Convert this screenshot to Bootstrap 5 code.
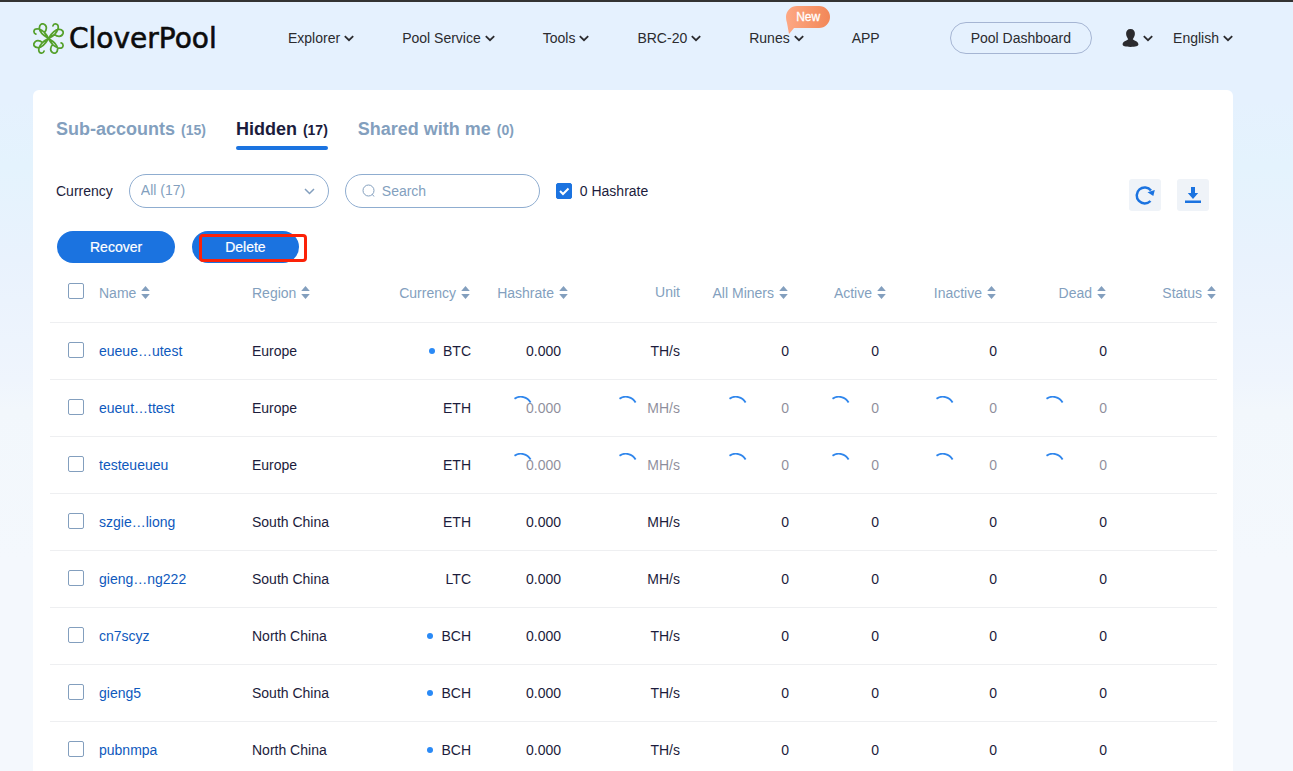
<!DOCTYPE html>
<html lang="en">
<head>
<meta charset="utf-8">
<meta name="viewport" content="width=device-width, initial-scale=1">
<title>CloverPool</title>
<link href="https://cdn.jsdelivr.net/npm/bootstrap@5.3.0/dist/css/bootstrap.min.css" rel="stylesheet">
<style>
  :root { --ink: #1c1c3c; --slate: #839fbe; --blue: #1b73e0; }
  body {
    font: 14px/20px "Liberation Sans", Arial, sans-serif;
    color: var(--ink);
    background: linear-gradient(180deg, #e5f1fe 0, #e5f1fe 100px, #e4f3fd 165px, #e9f2fd 260px, #eff5fd 380px, #f2f7fc 410px, #f4f8fd 560px) no-repeat #f4f8fd;
    border-top: 2px solid #333;
  }
  .page-gutter { padding-left: 33px; padding-right: 60px; }
  .top-bar { height: 88px; padding-top: 20px; align-items: flex-start; }
  .top-bar a, .menu-btn { color: #2b2b2e; text-decoration: none; }
  .menu-btn { background: none; border: 0; padding: 0; display: inline-flex; align-items: center; gap: 4px; position: relative; white-space: nowrap; }
  .brand { width: 187px; margin-right: 68px; gap: 5px; }
  .brand-name { font: 28px/32px "DejaVu Sans", sans-serif; color: #0c0c0c; padding-top: 1px; -webkit-text-stroke: .6px #0c0c0c; }
  .bar-group { height: 32px; }
  .main-links { gap: 48px; }
  .dash-link { border: 1px solid #a5b5d3; border-radius: 16px; height: 32px; line-height: 30px; padding: 0 20px; margin-right: 30px; }
  .new-tag { position: absolute; left: 37px; top: -22px; width: 44px; height: 28px; color: #fff; font-size: 12px; line-height: 22px; text-align: center; }
  .new-tag svg { position: absolute; inset: 0; }
  .new-tag span { position: relative; -webkit-text-stroke: .3px #fff; }
  .panel { background: #fff; border-radius: 6px 6px 0 0; padding: 24px 16px 0 17px; }
  .inset-row { padding-left: 6px; padding-right: 8px; }
  .tab-row { gap: 30px; }
  .tab-row button { background: none; border: 0; padding: 5px 0 6px; border-bottom: 4px solid transparent; color: var(--slate); font-weight: 700; font-size: 18px; line-height: 20px; }
  .tab-row button small { font-size: 14px; margin-left: 6px; }
  .tab-row button.active { color: var(--ink); position: relative; }
  .tab-row button.active::after { content: ""; position: absolute; left: 0; right: 0; bottom: -4px; height: 4px; border-radius: 2px; background: var(--blue); }
  .filter-row { margin-top: 24px; gap: 16px; }
  .pill { height: 34px; border: 1px solid #8fadd0; border-radius: 17px; color: var(--slate); background: #fff; }
  .pill-select { width: 200px; }
  .pill-select select { appearance: none; border: 0; background: none; color: inherit; padding: 0 11px; width: 100%; height: 30px; outline: 0; }
  .pill-select svg { position: absolute; right: 13px; top: 13px; pointer-events: none; }
  .pill-search { width: 195px; padding: 0 15px; gap: 6px; }
  .pill-search input { border: 0; padding: 0; background: none; width: 100%; outline: 0; }
  .pill-search input::placeholder { color: var(--slate); opacity: 1; }
  .tick { appearance: none; display: block; width: 16px; height: 16px; margin: 0; border: 1px solid #839fbe; border-radius: 2px; background: #fff; flex: none; }
  .tick:checked { border-color: var(--blue); background: var(--blue) url("data:image/svg+xml,%3Csvg xmlns='http://www.w3.org/2000/svg' viewBox='0 0 14 14'%3E%3Cpath d='M3 7l3 3 5.5-5.5' fill='none' stroke='%23fff' stroke-width='2'/%3E%3C/svg%3E"); }
  .tool-btn { width: 32px; height: 32px; border: 0; border-radius: 3px; background: #eff3f8; padding: 0; margin-top: 5px; display: grid; place-items: center; }
  .action-row { margin-top: 20px; gap: 17px; padding-left: 7px; }
  .act { height: 32px; border: 0; border-radius: 16px; background: var(--blue); color: #fff; padding: 0 33px; -webkit-text-stroke: .2px #fff; }
  .red-frame { position: absolute; left: 7px; top: 3px; width: 108px; height: 28px; border: 3px solid #fb2208; border-radius: 4px; pointer-events: none; }
  .accounts { width: 100%; table-layout: fixed; text-align: right; }
  .accounts th, .accounts td { padding: 0; height: 57px; border-bottom: 1px solid #eeeff1; white-space: nowrap; font-weight: 400; }
  .accounts th { height: 59px; color: var(--slate); }
  .accounts .lft { text-align: left; }
  .accounts .tick { margin: 0 0 2px 18px; }
  .accounts td.tucked { padding-right: 8px; }
  .accounts td a { color: #0e59bd; text-decoration: none; }
  .sort-btn { border: 0; background: none; color: inherit; padding: 0; display: inline-flex; align-items: center; gap: 5px; }
  .accounts th .sort-btn { margin-right: 1px; vertical-align: middle; }
  .coin-dot { display: inline-block; width: 6px; height: 6px; border-radius: 3px; background: #2a8af6; margin: 0 8px 2px 0; vertical-align: middle; }
  .busy { position: relative; }
  .busy span { opacity: .5; }
  .busy svg { position: absolute; left: calc(50% - 11px); top: calc(50% - 12px); }
</style>
</head>
<body>
<svg class="d-none" aria-hidden="true">
  <symbol id="chev" viewBox="0 0 10 7"><path d="M.8 1.2 5 5.2 9.2 1.2" fill="none" stroke="currentColor" stroke-width="1.8"/></symbol>
  <symbol id="sort" viewBox="0 0 9 14"><path d="M4.500 0 8.800 5H.2zM4.500 13 .2 8H8.800z" fill="currentColor"/></symbol>
  <symbol id="spin" viewBox="0 0 24 24"><path d="M5.500 2.700A11.200 11.200 0 0 1 21.600 6.500" fill="none" stroke="#2f86ec" stroke-width="1.800"/></symbol>
  <symbol id="leaf" viewBox="0 0 30 30"><path d="M15 15C9 11.500 6 8 6.200 4.500 6.400 1.500 8.500.3 10.300 1 13.800 2.500 13.600 6.500 11 9.200M15 15C12.500 9.500 9 6.800 5.500 5.800 2.500 5 .8 6.500.9 8.500 1 9.700 1.600 10.400 2.800 10.700M15 15 11 9.200"/></symbol>
</svg>

<header class="top-bar page-gutter d-flex">
  <a href="#" class="brand bar-group d-flex align-items-center">
    <svg width="31" height="31" viewBox="0 0 30 30" fill="none" stroke="#55a02c" stroke-width="1.700" stroke-linecap="round" class="flex-shrink-0">
      <use href="#leaf"/><use href="#leaf" transform="rotate(90 15 15)"/><use href="#leaf" transform="rotate(180 15 15)"/><use href="#leaf" transform="rotate(270 15 15)"/>
    </svg>
    <span class="brand-name">CloverPool</span>
  </a>
  <nav class="main-links bar-group d-flex align-items-center" aria-label="Main">
    <button class="menu-btn">Explorer <svg width="10" height="7"><use href="#chev"/></svg></button>
    <button class="menu-btn">Pool Service <svg width="10" height="7"><use href="#chev"/></svg></button>
    <button class="menu-btn">Tools <svg width="10" height="7"><use href="#chev"/></svg></button>
    <button class="menu-btn">BRC-20 <svg width="10" height="7"><use href="#chev"/></svg></button>
    <button class="menu-btn">Runes <svg width="10" height="7"><use href="#chev"/></svg>
      <span class="new-tag">
        <svg width="44" height="28" viewBox="0 0 44 28"><defs><linearGradient id="peach"><stop stop-color="#fda884"/><stop offset="1" stop-color="#f28758"/></linearGradient></defs><path d="M11 0H33a11 11 0 0 1 0 22H8L3 28 1 17Q0 14 0 11A11 11 0 0 1 11 0Z" fill="url(#peach)"/></svg>
        <span>New</span>
      </span>
    </button>
    <a href="#">APP</a>
  </nav>
  <div class="bar-group d-flex align-items-center ms-auto">
    <a href="#" class="dash-link">Pool Dashboard</a>
    <button class="menu-btn me-3" aria-label="Account">
      <svg width="17" height="18" viewBox="0 0 16 18"><path d="M8 0C11 0 12.600 2 12.400 5 12.200 7.500 11 9 10.300 10.300 10.500 11.300 15.900 12 15.900 15.300 15.900 17.300 13 17.900 8 17.900S.1 17.300.1 15.300C.1 12 5.500 11.300 5.700 10.300 5 9 3.800 7.500 3.600 5 3.400 2 5 0 8 0Z" fill="#2b2b2e"/></svg>
      <svg width="10" height="7"><use href="#chev"/></svg>
    </button>
    <button class="menu-btn ms-1">English <svg width="10" height="7"><use href="#chev"/></svg></button>
  </div>
</header>

<main class="page-gutter">
  <section class="panel">
    <div class="tab-row inset-row d-flex" role="tablist">
      <button role="tab">Sub-accounts<small>(15)</small></button>
      <button role="tab" class="active" aria-selected="true">Hidden<small>(17)</small></button>
      <button role="tab">Shared with me<small>(0)</small></button>
    </div>
    <div class="filter-row inset-row d-flex align-items-start">
      <div class="d-flex align-items-center gap-3">
        <label for="cur">Currency</label>
        <div class="pill pill-select position-relative">
          <select id="cur"><option>All (17)</option></select>
          <svg width="11" height="7" viewBox="0 0 11 7"><path d="M1 1l4.500 4.500L10 1" fill="none" stroke="#839fbe" stroke-width="1.500"/></svg>
        </div>
        <div class="pill pill-search d-flex align-items-center">
          <svg width="15" height="15" viewBox="0 0 15 15" fill="none" stroke="#839fbe" class="flex-shrink-0"><circle cx="7.500" cy="6.500" r="5.500"/><path d="M11.300 10.300 13 12.500"/></svg>
          <input type="text" placeholder="Search" aria-label="Search">
        </div>
        <div class="d-flex align-items-center gap-2">
          <input class="tick" type="checkbox" id="zero" checked>
          <label for="zero">0 Hashrate</label>
        </div>
      </div>
      <div class="d-flex gap-3 ms-auto">
        <button class="tool-btn" aria-label="Refresh"><svg width="22" height="22" viewBox="0 0 22 22"><path d="M17 6.500A8 8 0 1 0 16.500 17" fill="none" stroke="#1b73e0" stroke-width="2.500"/><path d="M13.500 8.300 20.800 6 19.300 12Z" fill="#1b73e0"/></svg></button>
        <button class="tool-btn" aria-label="Download"><svg width="16" height="16" viewBox="0 0 16 16"><path d="M6 0h4v6h3.200L8 12 2.800 6H6zM0 13.500h16V16H0z" fill="#1b73e0"/></svg></button>
      </div>
    </div>
    <div class="action-row d-flex">
      <button class="act">Recover</button>
      <div class="position-relative">
        <button class="act">Delete</button>
        <span class="red-frame"></span>
      </div>
    </div>
    <table class="accounts">
      <colgroup><col width="49"><col width="153"><col width="109"><col width="110"><col width="98"><col width="111"><col width="109"><col width="98"><col width="110"><col width="110"><col width="110"></colgroup>
      <thead><tr id="heads"><th><input class="tick" type="checkbox" aria-label="Select all"></th></tr></thead>
      <tbody id="rows"></tbody>
    </table>
  </section>
</main>

<script src="https://cdn.jsdelivr.net/npm/bootstrap@5.3.0/dist/js/bootstrap.bundle.min.js"></script>
<script>
  const heads = ["Name", "Region", "Currency", "Hashrate", "Unit", "All Miners", "Active", "Inactive", "Dead", "Status"];
  document.getElementById("heads").insertAdjacentHTML("beforeend", heads.map((h, i) =>
    `<th class="${i < 2 ? "lft" : ""}">${h === "Unit" ? h : `<button class="sort-btn">${h}<svg width="9" height="14"><use href="#sort"/></svg></button>`}</th>`).join(""));

  // name, region, coin, highlighted coin, unit, still loading
  const rows = [
    ["eueue…utest", "Europe", "BTC", 1, "TH/s", 0],
    ["eueut…ttest", "Europe", "ETH", 0, "MH/s", 1],
    ["testeueueu", "Europe", "ETH", 0, "MH/s", 1],
    ["szgie…liong", "South China", "ETH", 0, "MH/s", 0],
    ["gieng…ng222", "South China", "LTC", 0, "MH/s", 0],
    ["cn7scyz", "North China", "BCH", 1, "TH/s", 0],
    ["gieng5", "South China", "BCH", 1, "TH/s", 0],
    ["pubnmpa", "North China", "BCH", 1, "TH/s", 0]
  ];
  document.getElementById("rows").innerHTML = rows.map(([name, region, coin, dot, unit, busy]) => {
    const cell = (v, tucked) => `<td class="${tucked ? "tucked " : ""}${busy ? "busy" : ""}"><span>${v}</span>${busy ? '<svg width="24" height="24"><use href="#spin"/></svg>' : ""}</td>`;
    return `<tr><td><input class="tick" type="checkbox" aria-label="Select ${name}"></td>
      <td class="lft"><a href="#">${name}</a></td><td class="lft">${region}</td>
      <td>${dot ? '<span class="coin-dot"></span>' : ""}${coin}</td>
      ${cell("0.000", 1)}${cell(unit)}${cell(0)}${cell(0, 1)}${cell(0)}${cell(0)}<td></td></tr>`;
  }).join("");
</script>
</body>
</html>
